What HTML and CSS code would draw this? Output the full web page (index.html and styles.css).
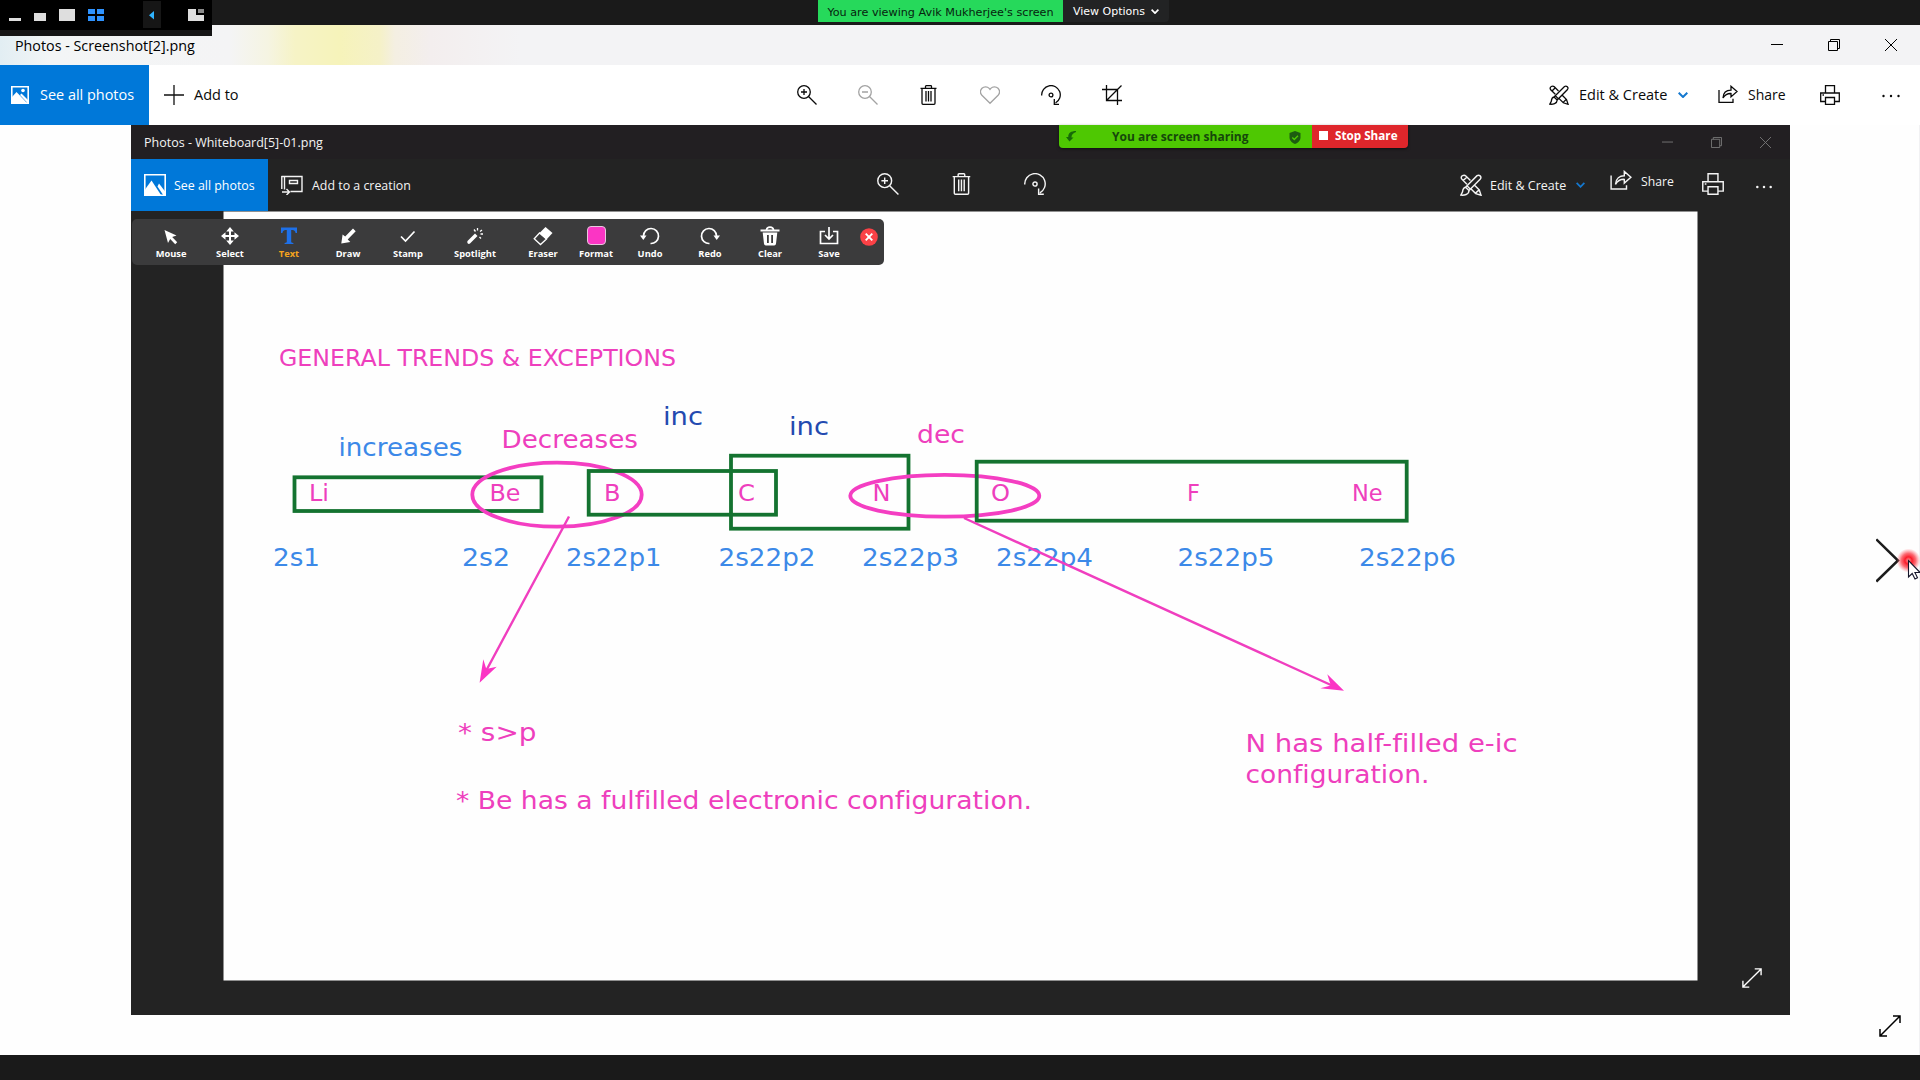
FILE: index.html
```html
<!DOCTYPE html>
<html lang="en">
<head>
<meta charset="utf-8">
<title>Photos - Screenshot[2].png</title>
<link rel="stylesheet" href="styles.css">
</head>
<body>
<svg class="defs" aria-hidden="true">
  <symbol id="zoom-in" viewBox="0 0 20 20"><circle cx="7" cy="7" r="6.3"/><path d="M11.5 11.5l8 8M4 7h6M7 4v6"/></symbol>
  <symbol id="zoom-out" viewBox="0 0 20 20"><circle cx="7" cy="7" r="6.3"/><path d="M11.5 11.5l8 8M4 7h6"/></symbol>
  <symbol id="trash" viewBox="0 0 20 20"><path d="M1.500 3.3h16M3 3.3v15q0 1 1 1h11q1 0 1-1v-15M6.500 3V1.500q0-.8.8-.8h4.400q.8 0 .8.8V3M7 6v10.500M9.500 6v10.500M12 6v10.500"/></symbol>
  <symbol id="heart" viewBox="0 0 20 20"><path d="M10 18.300L1.900 10.200C-.4 7.600.6 4.800 2 3.300c2-2 5.300-2 7.200.1l.8 1 .8-1c1.900-2.100 5.200-2.100 7.200-.1 1.400 1.500 2.400 4.300.1 6.900z"/></symbol>
  <symbol id="rotate" viewBox="0 0 20 20"><path d="M.7 10.500A9.300 9.300 0 1 1 14.500 18M13.300 14v5.300H18"/><circle cx="10" cy="10" r="1.900"/></symbol>
  <symbol id="crop" viewBox="0 0 20 20"><path d="M4.500 0v15.500H20M0 4.500h15.500V20M4.500 15.500L19.500.5"/></symbol>
  <symbol id="edit" viewBox="0 0 20 20"><path d="M6.300 9.300L1.500 4.500Q.5 2.500 2.300 1.500 4 .5 5.300 1.800L9.500 6M3 6l3.300-3.300M13.500 10.500l4 4 1.600 4.800-4.800-1.500-4.200-4.200M13.900 17.600l3.500-3.300M5 12L15.500 1.500q1.500-1 2.800.2t.2 2.800L8.200 15M5 12c-2.200.5-2.500 2-2.700 4.200L.8 19.200c3 .3 7.300-.4 7.400-4.200zM6.300 10.700l3.200 3.200"/></symbol>
  <symbol id="share" viewBox="0 0 20 20"><path d="M1 5v12.300h14v-3.500M5 13c.3-5.500 4-7.800 8-7.800V1.300l6 5.300-6 5.300V8.500C9.500 8.300 7 9.800 5 13z"/></symbol>
  <symbol id="print" viewBox="0 0 20 20"><path d="M5.500 8V.7h9V8M5.500 16.500H.7V8h18.600v8.500h-4.800M5.500 12.500h9v6.800h-9zM2.500 10h1.500"/></symbol>
  <symbol id="expand" viewBox="0 0 22 22"><path d="M1 21L21 1M14 1h7v7M1 14v7h7"/></symbol>
  <symbol id="min" viewBox="0 0 12 12"><path d="M0 5.500h12"/></symbol>
  <symbol id="restore" viewBox="0 0 12 12"><path d="M.5 2.500h9v9h-9zM2.500 2.500v-2h9v9h-2"/></symbol>
  <symbol id="close" viewBox="0 0 12 12"><path d="M0 0l12 12M12 0L0 12"/></symbol>
  <symbol id="chev" viewBox="0 0 10 6"><path d="M.7.7L5 5 9.300.7"/></symbol>
</svg>

<header class="share-bar">
  <div class="share-banner">You are viewing Avik Mukherjee's screen</div>
  <div class="view-options">View Options <svg class="i vchev"><use href="#chev"/></svg></div>
</header>
<div class="layout-controls">
  <svg width="212" height="36" viewBox="0 0 212 36">
    <rect width="212" height="36" fill="#151515"/><rect width="212" height="30" fill="#000"/>
    <rect x="143" y="1" width="18" height="27" fill="#161616"/>
    <g fill="#dedede"><path d="M9 18h12v3H9zM34 13h12v8H34zM59 9h16v12H59zM188 9h8v6h8v6h-16z"/></g>
    <path d="M198 9h6v4h-6z" fill="#8a8a8a"/>
    <path d="M88 9h7v5h-7zM97 9h7v5h-7zM88 16h7v5h-7zM97 16h7v5h-7z" fill="#2f93ff"/>
    <path d="M154 11v8.500l-5-4.300z" fill="#2fb4ff"/>
  </svg>
</div>

<main class="photos">
  <div class="titlebar">
    <span class="title">Photos - Screenshot[2].png</span>
    <svg class="i win"><use href="#min"/></svg>
    <svg class="i win"><use href="#restore"/></svg>
    <svg class="i win"><use href="#close"/></svg>
  </div>
  <nav class="toolbar">
    <div class="see-all">
      <svg width="18" height="18" viewBox="0 0 18 18"><path d="M.8.8h16.400v16.400H.8z" fill="none" stroke="#fff" stroke-width="1.600"/><path d="M1 11l4.500-5L16 17H1z" fill="#fff"/><path d="M9 9l1.500-1.500L17 14v3h-.5z" fill="#fff"/><circle cx="12" cy="4.500" r="1.800" fill="#fff"/></svg>
      <span>See all photos</span>
    </div>
    <div class="add-to"><svg class="plus" viewBox="0 0 20 20"><path d="M10 0v20M0 10h20"/></svg><span>Add to</span></div>
    <div class="center-tools">
      <svg class="i"><use href="#zoom-in"/></svg>
      <svg class="i dim"><use href="#zoom-out"/></svg>
      <svg class="i"><use href="#trash"/></svg>
      <svg class="i dim"><use href="#heart"/></svg>
      <svg class="i"><use href="#rotate"/></svg>
      <svg class="i"><use href="#crop"/></svg>
    </div>
    <div class="right-tools">
      <svg class="i"><use href="#edit"/></svg><span class="lbl-edit">Edit &amp; Create</span>
      <svg class="i chev"><use href="#chev"/></svg>
      <svg class="i"><use href="#share"/></svg><span class="lbl-share">Share</span>
      <svg class="i"><use href="#print"/></svg>
      <svg class="dots" viewBox="0 0 18 4"><circle cx="1.500" cy="2" r="1.200"/><circle cx="9" cy="2" r="1.200"/><circle cx="16.500" cy="2" r="1.200"/></svg>
    </div>
  </nav>

  <section class="viewer">
    <div class="shot">
      <div class="shot-title">
        <span class="title">Photos - Whiteboard[5]-01.png</span>
        <svg class="i win"><use href="#min"/></svg>
        <svg class="i win"><use href="#restore"/></svg>
        <svg class="i win"><use href="#close"/></svg>
      </div>
      <div class="sharing">
        <div class="sharing-info">
          <svg width="10" height="11" viewBox="0 0 10 11"><path d="M10 0C5 0 2 2 2.300 6H0l3.500 4.500L7.500 6.500H5.500C5.300 4 7 2 10 1z" fill="#176a08"/></svg>
          <span>You are screen sharing</span>
          <svg class="shield" width="12" height="13" viewBox="0 0 12 13"><path d="M6 0l5.500 2v4.500C11.500 9.500 9 12 6 13 3 12 .5 9.500.5 6.500V2z" fill="#1d5c10"/><path d="M3.300 6.500l2 2L9 4.800" fill="none" stroke="#4ecb00" stroke-width="1.300"/></svg>
        </div>
        <div class="stop"><i></i>Stop Share</div>
      </div>
      <nav class="shot-toolbar">
        <div class="see-all">
          <svg width="22" height="22" viewBox="0 0 22 22"><path d="M.8.8h20.400v20.400H.8z" fill="none" stroke="#fff" stroke-width="1.600"/><path d="M1 15.500L7.500 6.500 17 21H1z" fill="#fff"/><path d="M13.500 12.500l1.500-3 6.500 8.500v3.500h-2z" fill="#fff"/></svg>
          <span>See all photos</span>
        </div>
        <svg class="creation" viewBox="0 0 22 20"><path d="M3.500 14.500V1.500H21v15H9.500M.8 1v13M3.500 1.500H.5M8.500 5.500h8v3h-8zM1 17h7M5.500 14l3 3-3 3"/></svg>
        <span class="lbl-creation">Add to a creation</span>
        <div class="center-tools">
          <svg class="i"><use href="#zoom-in"/></svg>
          <svg class="i"><use href="#trash"/></svg>
          <svg class="i"><use href="#rotate"/></svg>
        </div>
        <div class="right-tools">
          <svg class="i edit"><use href="#edit"/></svg><span class="lbl-edit">Edit &amp; Create</span>
          <svg class="i chev"><use href="#chev"/></svg>
          <svg class="i raise"><use href="#share"/></svg><span class="lbl-share raise">Share</span>
          <svg class="i print"><use href="#print"/></svg>
          <svg class="dots" viewBox="0 0 18 4"><circle cx="1.500" cy="2" r="1.400"/><circle cx="9" cy="2" r="1.400"/><circle cx="16.500" cy="2" r="1.400"/></svg>
        </div>
      </nav>

      <svg class="board" viewBox="223 211 1475 770">
        <rect class="paper" x="223.500" y="211.500" width="1474" height="769"/>
        <g class="pink sm">
          <text x="279" y="365.500" textLength="397" lengthAdjust="spacingAndGlyphs">GENERAL TRENDS &amp; EXCEPTIONS</text>
          <text x="309" y="501" textLength="20" lengthAdjust="spacingAndGlyphs">Li</text><text x="489.500" y="501" textLength="31" lengthAdjust="spacingAndGlyphs">Be</text><text x="604" y="501" textLength="16.500" lengthAdjust="spacingAndGlyphs">B</text>
          <text x="738" y="501" textLength="17" lengthAdjust="spacingAndGlyphs">C</text><text x="872.500" y="501" textLength="18" lengthAdjust="spacingAndGlyphs">N</text><text x="991" y="501" textLength="19" lengthAdjust="spacingAndGlyphs">O</text>
          <text x="1187" y="501">F</text><text x="1352" y="501">Ne</text>
        </g>
        <g class="blue">
          <text x="338.500" y="455.500" textLength="124" lengthAdjust="spacingAndGlyphs">increases</text>
          <text x="273" y="565.500" textLength="47" lengthAdjust="spacingAndGlyphs">2s1</text>
          <text x="462" y="565.500" textLength="48" lengthAdjust="spacingAndGlyphs">2s2</text>
          <text x="566" y="565.500" textLength="95.500" lengthAdjust="spacingAndGlyphs">2s22p1</text>
          <text x="718.500" y="565.500" textLength="97" lengthAdjust="spacingAndGlyphs">2s22p2</text>
          <text x="862" y="565.500" textLength="97" lengthAdjust="spacingAndGlyphs">2s22p3</text>
          <text x="996" y="565.500" textLength="97" lengthAdjust="spacingAndGlyphs">2s22p4</text>
          <text x="1177.500" y="565.500" textLength="97" lengthAdjust="spacingAndGlyphs">2s22p5</text>
          <text x="1359" y="565.500" textLength="97" lengthAdjust="spacingAndGlyphs">2s22p6</text>
        </g>
        <g class="navy">
          <text x="663" y="424.500" textLength="40" lengthAdjust="spacingAndGlyphs">inc</text>
          <text x="789" y="434.700" textLength="40" lengthAdjust="spacingAndGlyphs">inc</text>
        </g>
        <g class="pink">
          <text x="501.500" y="447.800" textLength="136.500" lengthAdjust="spacingAndGlyphs">Decreases</text>
          <text x="917" y="442.500" textLength="48" lengthAdjust="spacingAndGlyphs">dec</text>
          <text x="458" y="741.300" textLength="78.500" lengthAdjust="spacingAndGlyphs">* s&gt;p</text>
          <text x="456" y="808.700" textLength="576" lengthAdjust="spacingAndGlyphs">* Be has a fulfilled electronic configuration.</text>
          <text x="1245.500" y="752" textLength="272" lengthAdjust="spacingAndGlyphs">N has half-filled e-ic</text>
          <text x="1245.500" y="783" textLength="184" lengthAdjust="spacingAndGlyphs">configuration.</text>
        </g>
        <g class="green">
          <rect x="294.500" y="477.300" width="247" height="33.700"/>
          <rect x="731" y="455.700" width="177.500" height="73"/>
        </g>
        <g class="ring">
          <ellipse cx="557" cy="494.700" rx="84.700" ry="32"/>
          <ellipse cx="944.800" cy="495.800" rx="94.500" ry="20.900"/>
        </g>
        <g class="green">
          <rect x="588.700" y="471" width="187.300" height="43.700"/>
          <rect x="976.700" y="461.700" width="430" height="59"/>
        </g>
        <g class="arrow">
          <path d="M569 516.500L486 671M964 518L1332 685.500"/>
          <path class="head" d="M479.600 682.700l3.700-23.400 3 9.700 10.400-2.300zM1344 690.700l-16.700-16.400 3.500 11.200-10.500 2.800z"/>
        </g>
      </svg>

      <div class="annotate">
        <div><svg class="a" viewBox="0 0 20 20"><path class="f" d="M3.500 4l12 5.500-4.300 1.500 5 5.300-2 1.900-5-5.200L7 17z"/></svg>Mouse</div>
        <div><svg class="a" viewBox="0 0 20 20"><path class="f" d="M10 1l3.800 4.500H11V9h3.500V6.200L19 10l-4.500 3.800V11H11v3.500h2.800L10 19l-3.800-4.500H9V11H5.500v2.800L1 10l4.500-3.800V9H9V5.500H6.200z"/></svg>Select</div>
        <div class="on"><svg class="a" viewBox="0 0 20 20"><path d="M2 1.500h16v5.500h-1.400c-.5-2.200-1.500-2.900-3.100-2.900H12.200V15.500c0 1 .5 1.400 2.200 1.500V18H5.600v-1C7.300 16.900 7.800 16.500 7.800 15.500V4.100H6.500C4.900 4.100 3.900 4.800 3.400 7H2z"/></svg>Text</div>
        <div><svg class="a" viewBox="0 0 20 20"><path class="f" d="M15 2.500l2.700 2.700-8 8.200 2.600 2.600-9 1.500 1.300-9L7.200 10.600z"/></svg>Draw</div>
        <div><svg class="a" viewBox="0 0 20 20"><path class="l" d="M3 10.500l4.500 4.500 9-9.500"/></svg>Stamp</div>
        <div><svg class="a" viewBox="0 0 20 20"><path class="f" d="M2.500 15l7.500-7.500 2.500 2.500-7.500 7.500q-1.200.9-2.200 0-1-1.200-.3-2.500z"/><path class="l n" d="M9 3.500l1.500 2M12.500 2v2.500M17 4l-2 1.500M15.500 8H18M14.500 11l1.500 1.500"/></svg>Spotlight</div>
        <div><svg class="a" viewBox="0 0 20 20"><path class="f" d="M12.500 1l7 6-6 6.500L6.500 7z"/><path class="l n" d="M6.500 7L1.200 12.800l6.300 5.700 6-5.500z"/></svg>Eraser</div>
        <div><i class="swatch"></i>Format</div>
        <div><svg class="a" viewBox="0 0 20 20"><path class="l" d="M3.500 10a7.500 7.500 0 1 1 7 7.500"/><path class="f" d="M0 9.500h6.500L3.300 14z"/></svg>Undo</div>
        <div><svg class="a" viewBox="0 0 20 20"><path class="l" d="M16.500 10a7.500 7.500 0 1 0-7 7.500"/><path class="f" d="M20 9.500h-6.500l3.200 4.500z"/></svg>Redo</div>
        <div><svg class="a" viewBox="0 0 20 20"><path class="f" fill-rule="evenodd" d="M.5 3.500h19v2H.5zM2.700 6.500h14.600l-1.300 11.200q-.2 1.800-1.800 1.800H5.800q-1.600 0-1.800-1.800zM7 9v8h1.800V9zM11.200 9v8H13V9z"/><path class="l" d="M6.500 4q.3-2.800 3.500-2.800T13.500 4"/></svg>Clear</div>
        <div><svg class="a" viewBox="0 0 20 20"><path class="l" d="M6 5.500H1.500v12h17v-12H14M10 1v11.500M6 9l4 4 4-4"/></svg>Save</div>
        <div class="x"><svg width="18" height="18" viewBox="0 0 18 18"><circle cx="9" cy="9" r="8.800" fill="#fb4146"/><path d="M5.700 5.700l6.600 6.600M12.300 5.700l-6.600 6.600" stroke="#fff" stroke-width="1.900"/></svg></div>
      </div>
      <svg class="i shot-expand"><use href="#expand"/></svg>
    </div>
    <svg class="next" width="44" height="60" viewBox="1876 535 44 60">
      <defs><radialGradient id="glow"><stop offset="0" stop-color="#ff9a9a"/><stop offset=".3" stop-color="#fb1d2b"/><stop offset=".6" stop-color="#fb3b46" stop-opacity=".75"/><stop offset="1" stop-color="#ff6670" stop-opacity="0"/></radialGradient></defs>
      <path d="M1876.300 539.300L1898 560.500l-21.700 21" fill="none" stroke="#1c1c1c" stroke-width="2.500"/>
      <circle cx="1908.500" cy="560.500" r="12" fill="url(#glow)"/>
      <path d="M1908.500 560.500v16.500l3.700-3.500 2.800 5.500 2.500-1.300-2.600-5.200h5.200z" fill="#fff" stroke="#15152a" stroke-width="1.100"/>
    </svg>
    <svg class="i page-expand"><use href="#expand"/></svg>
  </section>
</main>
<footer class="bottom-bar"></footer>
</body>
</html>
```
FILE: styles.css
```css
* { box-sizing: border-box; }
body {
  margin: 0; width: 1920px; height: 1080px; overflow: hidden;
  display: flex; flex-direction: column; background: #1a1a1a;
  font-family: "Open Sans", "Noto Sans", sans-serif; font-size: 14.3px; color: #111;
}
svg { display: block; flex: none; }
span { white-space: nowrap; }
.defs { position: absolute; width: 0; height: 0; }
.i { fill: none; stroke: currentColor; stroke-width: 1.3; width: 20px; height: 20px; overflow: visible; }

.share-bar { height: 25px; flex: none; display: flex; padding-left: 818px; background: #1a1a1a; font-family: "DejaVu Sans", sans-serif; }
.share-banner { width: 245px; height: 22px; line-height: 23px; padding-top: 1px; text-align: center; font-size: 11.2px; color: #06240f; background: #26d95b; white-space: nowrap; }
.view-options { width: 106px; height: 22px; display: flex; align-items: center; padding-left: 10px; gap: 6px; font-size: 11px; color: #fff; background: #222324; border-radius: 0 0 4px 0; white-space: nowrap; }
.vchev { width: 8px; height: 5px; stroke-width: 2.200; }
.layout-controls { position: absolute; left: 0; top: 0; z-index: 2; }

.photos { height: 1030px; flex: none; display: flex; flex-direction: column; background: #fefefe; }
.titlebar {
  height: 40px; flex: none; display: flex; align-items: center; padding: 0 23px 0 15px; gap: 45px; color: #000;
  background: linear-gradient(90deg, #e2eef3 0, #f3f5f6 50px, #f4f4f5 230px, #f5f4e2 268px, #f6f3c6 295px, #f6f3ba 340px, #f5f1c8 380px, #f4efe2 395px, #f3eeee 430px, #f3f3f5 520px);
}
.title { flex: 1; }
.win { width: 12px; height: 12px; stroke-width: 1; }
.toolbar { height: 60px; flex: none; display: flex; align-items: center; background: #fff; color: #0a0a0a; }
.toolbar span { padding-bottom: 2px; }
.see-all { display: flex; align-items: center; color: #fff; background: #0078d9; }
.toolbar .see-all { width: 149px; height: 60px; padding-left: 11px; gap: 11px; }
.add-to { width: 648px; display: flex; align-items: center; padding-left: 15px; gap: 10px; font-size: 14.500px; }
.plus { width: 20px; height: 20px; stroke: #111; stroke-width: 1.300; }
.center-tools { display: flex; }
.toolbar .center-tools { gap: 41px; }
.dim { color: #a3a3a3; }
.right-tools { display: flex; align-items: center; }
.toolbar .right-tools { margin-left: 427px; }
.toolbar .lbl-edit { width: 89px; margin-left: 10px; font-size: 14.500px; }
.toolbar .lbl-share { width: 72px; margin-left: 10px; font-size: 14px; }
.chev { width: 10px; height: 6px; color: #1478cf; stroke-width: 2; }
.toolbar .chev { margin: 0 30px 0 10px; }
.dots { width: 18px; height: 4px; fill: currentColor; }
.toolbar .dots { margin: 2px 0 0 42px; }

.viewer { position: relative; flex: 1; padding-left: 131px; border-right: 1px solid #f1f1f3; }
.shot { position: relative; width: 1659px; height: 890px; background: #232323; color: #f4f4f4; font-size: 12.5px; }
.shot-title { height: 34px; display: flex; align-items: center; padding: 0 19px 0 13px; gap: 38px; background: #221f22; }
.shot-title .win { width: 11px; height: 11px; color: #777; }
.sharing { position: absolute; left: 928px; top: 0; display: flex; align-items: flex-start; box-shadow: 0 1px 3px #0008; border-radius: 0 0 4px 4px; overflow: hidden; font-weight: 700; }
.sharing-info { width: 253px; height: 23px; display: flex; align-items: center; padding-left: 7px; background: #4ec802; color: #15470b; font-size: 12px; }
.sharing-info span { width: 177px; margin-left: 36px; }
.shield { margin-top: 2px; }
.stop { width: 96px; height: 23px; display: flex; align-items: center; padding: 0 0 3px 7px; gap: 7px; background: #df262b; color: #fff; font-size: 11.700px; white-space: nowrap; }
.stop i { width: 9px; height: 9px; background: #fff; }
.shot-toolbar { height: 52px; display: flex; align-items: center; }
.shot-toolbar .see-all { width: 137px; height: 52px; padding-left: 13px; gap: 8px; }
.see-all span { font-size: 1.01em; }
.shot-toolbar .see-all span { font-size: 12.400px; }
.creation { width: 22px; height: 20px; margin-left: 13px; fill: none; stroke: #f4f4f4; stroke-width: 1.400; }
.lbl-creation { width: 565px; margin-left: 9px; font-size: 12.400px; }
.shot-toolbar .i { width: 22px; height: 22px; }
.shot-toolbar .center-tools { gap: 51.500px; padding-bottom: 3px; }
.shot-toolbar .right-tools { margin-left: 414px; }
.shot-toolbar .lbl-edit { width: 76px; margin-left: 8px; }
.shot-toolbar .lbl-share { width: 32px; margin-left: 9px; font-size: 12.200px; }
.shot-toolbar .i.chev { width: 9px; height: 6px; margin: 0 25px 0 10px; }
.raise { margin-bottom: 8px; }
.print { margin: 0 0 3px 29px; }
.shot-toolbar .dots { width: 16px; margin: 3px 0 0 32px; }
.board { width: 1475px; height: 770px; margin-left: 92px; font-family: "DejaVu Sans", sans-serif; font-size: 25px; font-variant-ligatures: none; }
.paper { fill: #fefefe; }
.pink { fill: #ee3fbd; }
.sm { font-size: 22.500px; }
.blue { fill: #3c89e8; }
.navy { fill: #234ab0; }
.green { fill: none; stroke: #147330; stroke-width: 3.800; }
.ring { fill: none; stroke: #f43ec2; stroke-width: 3.800; }
.arrow { fill: none; stroke: #f03ebf; stroke-width: 2.400; }
.head { fill: #fb35c4; stroke: none; }

.annotate {
  position: absolute; left: 1px; top: 94px; width: 752px; height: 46px; padding-left: 10px; border-radius: 5px;
  display: grid; grid-template-columns: 58px 60px 58px 60px 60px 74px 62px 44px 64px 56px 64px 54px 26px;
  background: #3b3b3c; color: #fff; font-size: 9.300px; font-weight: 700; line-height: 12px;
}
.annotate > div { display: flex; flex-direction: column; align-items: center; padding-top: 7px; gap: 2px; }
.annotate > .x { padding-top: 9px; }
.a { width: 20px; height: 20px; }
.f { fill: #fff; }
.l { fill: none; stroke: #fff; stroke-width: 1.700; }
.n { stroke-width: 1.300; }
.annotate .on { color: #f5a31c; }
.on path { fill: #1e70e8; }
.swatch { width: 19px; height: 19px; margin-bottom: 1px; border-radius: 4px; border: 1px solid #e8c7de; background: #fb35c4; }
.shot-expand { position: absolute; left: 1610.500px; top: 843px; color: #fff; stroke-width: 1.500; }
.next { position: absolute; right: -1px; top: 410px; }
.page-expand { position: absolute; left: 1878.500px; top: 889.500px; width: 22px; height: 22px; color: #000; stroke-width: 1.500; }
.bottom-bar { height: 25px; flex: none; background: #1a1a1a; }
```
